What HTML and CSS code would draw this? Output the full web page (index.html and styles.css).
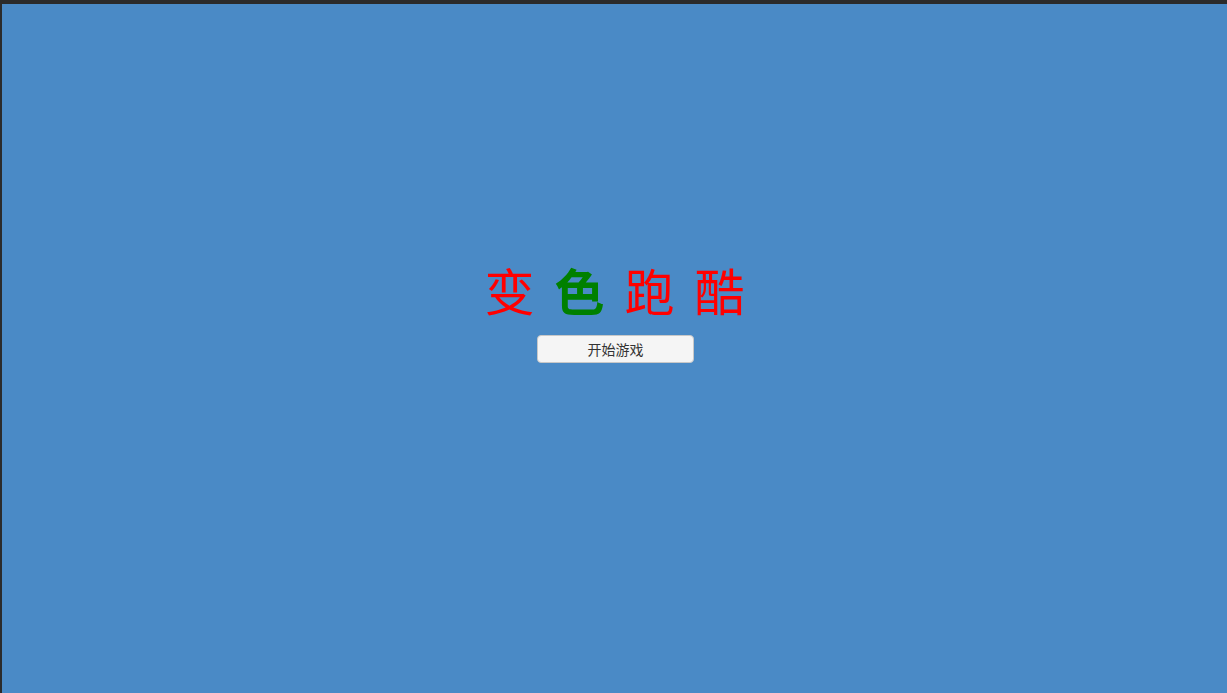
FILE: index.html
```html
<!DOCTYPE html>
<html lang="zh">
<head>
<meta charset="utf-8">
<title>变色跑酷</title>
<link rel="stylesheet" href="styles.css">
</head>
<body>
<div class="frame">
  <main class="stage">
    <h1 class="title"><span class="red">变</span><span class="green">色</span><span class="red">跑</span><span class="red last">酷</span></h1>
    <button class="start">开始游戏</button>
  </main>
</div>
</body>
</html>
```
FILE: styles.css
```css
html, body {
  margin: 0;
  padding: 0;
  height: 100%;
}
body {
  background: #2b2b2b;
  font-family: "Noto Sans CJK SC", "Noto Sans", sans-serif;
}
.frame {
  box-sizing: border-box;
  height: 100%;
  padding: 4px 0 0 2px;
}
.stage {
  height: 100%;
  background: #4a8ac6;
  display: flex;
  flex-direction: column;
  align-items: center;
  padding-top: 250px;
  box-sizing: border-box;
}
.title {
  margin: 0;
  font-size: 50px;
  font-weight: normal;
  line-height: 70px;
  display: flex;
  gap: 20px;
}
.red { color: #ff0000; }
.green { color: #008000; font-weight: bold; }
.start {
  margin-top: 11px;
  margin-left: 2px;
  width: 157px;
  height: 28px;
  background: #f5f5f5;
  border: 1px solid #c8c8c8;
  border-radius: 4px;
  color: #333;
  font-family: "Noto Sans CJK SC", sans-serif;
  font-size: 14px;
  padding: 0;
}
```
